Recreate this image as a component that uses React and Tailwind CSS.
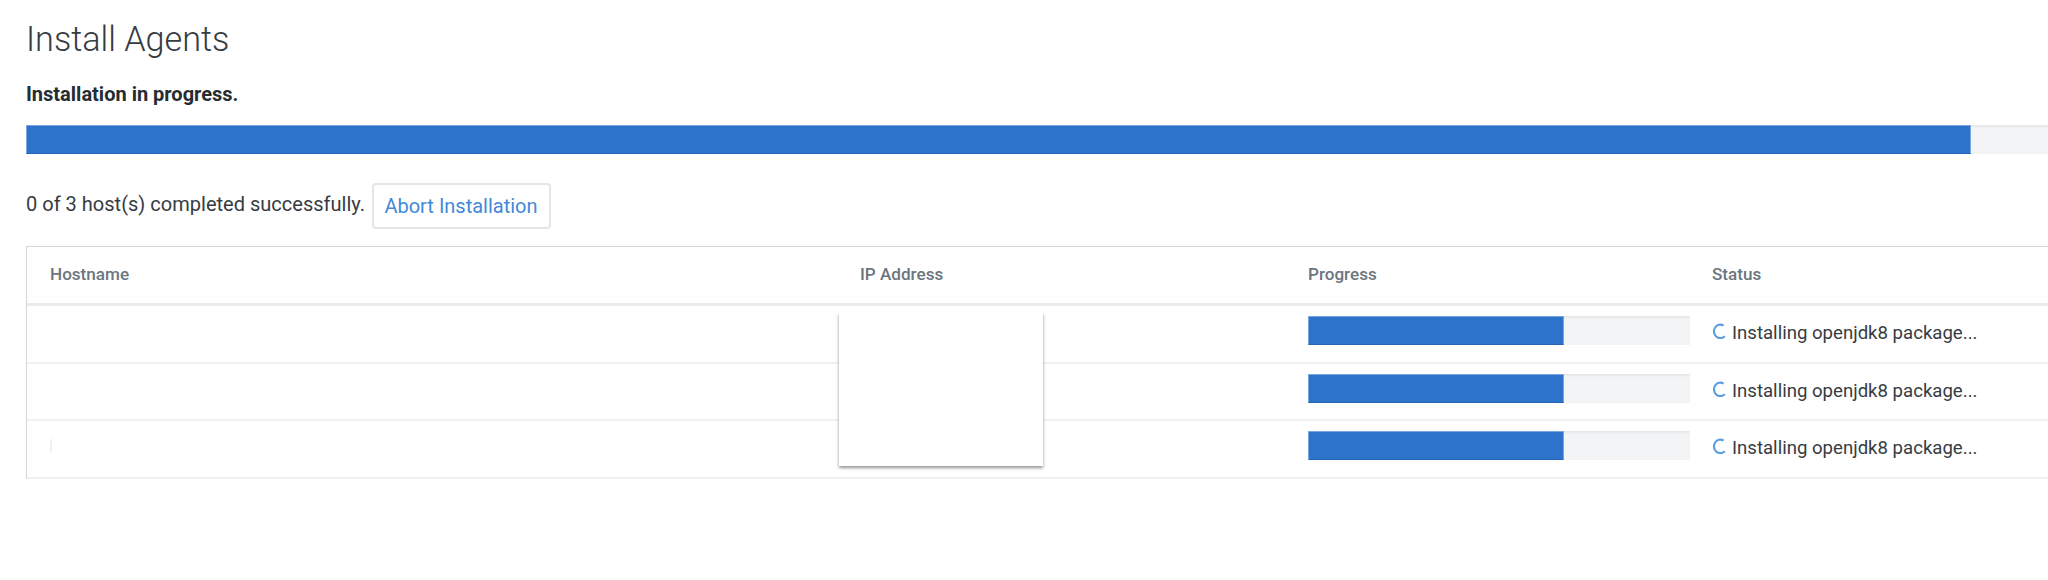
const rows = [
  { id: 1, caret: false },
  { id: 2, caret: false },
  { id: 3, caret: true },
];

function Spinner() {
  return (
    <svg className="h-[16px] w-[15px] shrink-0" viewBox="0 0 15 16" fill="none">
      <path
        d="M11.6 2.6A6.4 6.7 0 1 0 12.8 13.2"
        stroke="#5b9ce0"
        strokeWidth="2.1"
      />
    </svg>
  );
}

function Row({ caret }) {
  return (
    <div className="flex h-[57.5px] border-b-2 border-[#f0f0f1]">
      <div className="w-[833px] pl-[23px] pt-[18px]">
        {caret && <div className="h-[14px] w-[2px] bg-[#f0f0f1]" />}
      </div>
      <div className="w-[448px]" />
      <div className="w-[404px] pt-[10px]">
        <div className="flex h-[29px] w-[382px] bg-[#f3f4f6] shadow-[inset_0_2px_2px_rgba(0,0,0,0.05)]">
          <div className="h-full w-[256px] border border-[#78a6e0] border-b-[#2764b4] bg-[#2d73cb]" />
        </div>
      </div>
      <div className="flex items-start pt-[15px]">
        <div className="pt-[2px]">
          <Spinner />
        </div>
        <span className="ml-[5px] whitespace-nowrap text-[18.6px] leading-[24px]">
          Installing openjdk8 package...
        </span>
      </div>
    </div>
  );
}

export default function App() {
  return (
    <main className="h-[580px] w-full overflow-hidden bg-white pl-[26px] font-['Roboto',sans-serif] text-[20px] text-[#363c42]">
      <h1 className="pt-[18px] text-[34.2px] font-light leading-[42px]">Install Agents</h1>
      <p className="mt-[22px] text-[20px] font-bold leading-[24px] text-[#252c32]">
        Installation in progress.
      </p>
      <div className="-mr-[8px] mt-[19px] flex h-[29px] bg-[#f3f4f6] shadow-[inset_0_2px_2px_rgba(0,0,0,0.05)]">
        <div className="h-full w-[1945px] border border-[#78a6e0] border-b-[#2764b4] bg-[#2d73cb]" />
      </div>
      <div className="mt-[29px] flex h-[46px]">
        <span className="mt-[9px] w-[339px] whitespace-nowrap text-[20.05px] leading-[24px]">
          0 of 3 host(s) completed successfully.
        </span>
        <button className="ml-[7px] h-[46px] w-[179px] whitespace-nowrap rounded-[4px] border-2 border-[#e4e5e7] pr-px text-[20px] leading-[24px] text-[#4389d8]">
          Abort Installation
        </button>
      </div>
      <section className="relative mt-[17px] border-l border-t border-[#d3d6d9] pt-px">
        <div className="flex h-[58px] border-b-[3px] border-[#ebebec] pt-[14px] text-[17.1px] font-medium leading-[24px] text-[#6b757e]">
          <div className="w-[833px] pl-[23px]">Hostname</div>
          <div className="w-[448px]">IP Address</div>
          <div className="w-[404px]">Progress</div>
          <div>Status</div>
        </div>
        {rows.map((row) => (
          <Row key={row.id} caret={row.caret} />
        ))}
        <div className="absolute left-[812px] top-[65px] h-[154px] w-[204px] bg-white shadow-[0_2px_3px_rgba(0,0,0,0.42)]" />
        <div className="absolute left-[808px] top-[59px] h-[8px] w-[212px] bg-white" />
      </section>
    </main>
  );
}
